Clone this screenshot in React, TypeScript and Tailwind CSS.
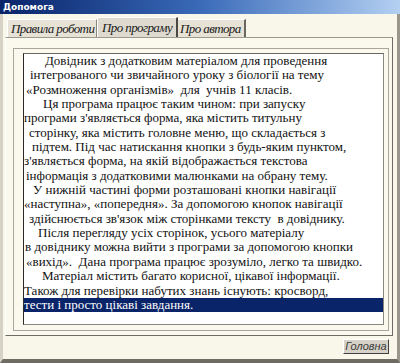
import React from "react";

const lines: { t: string; pl: string }[] = [
  { t: "Довідник з додатковим матеріалом для проведення", pl: "pl-[21px]" },
  { t: "інтегрованого чи звичайного уроку з біології на тему", pl: "pl-[6px]" },
  { t: "«Розмноження організмів»  для  учнів 11 класів.", pl: "pl-[2px]" },
  { t: "Ця програма працює таким чином: при запуску", pl: "pl-[19px]" },
  { t: "програми з'являється форма, яка містить титульну", pl: "pl-[0px]" },
  { t: "сторінку, яка містить головне меню, що складається з", pl: "pl-[5px]" },
  { t: "підтем. Під час натискання кнопки з будь-яким пунктом,", pl: "pl-[8px]" },
  { t: "з'являється форма, на якій відображається текстова", pl: "pl-[0px]" },
  { t: "інформація з додатковими малюнками на обрану тему.", pl: "pl-[2px]" },
  { t: "У нижній частині форми розташовані кнопки навігації", pl: "pl-[9px]" },
  { t: "«наступна», «попередня». За допомогою кнопок навігації", pl: "pl-[0px]" },
  { t: "здійснюється зв'язок між сторінками тексту  в довіднику.", pl: "pl-[5px]" },
  { t: "Після перегляду усіх сторінок, усього матеріалу", pl: "pl-[14px]" },
  { t: "в довіднику можна вийти з програми за допомогою кнопки", pl: "pl-[1px]" },
  { t: "«вихід».  Дана програма працює зрозуміло, легко та швидко.", pl: "pl-[2px]" },
  { t: "Матеріал містить багато корисної, цікавої інформації.", pl: "pl-[18px]" },
  { t: "Також для перевірки набутих знань існують: кросворд,", pl: "pl-[0px]" },
];

export default function App() {
  return (
    <div className="w-[400px] h-[363px] flex flex-col bg-[#f9f6ea] overflow-hidden">
      {/* Title bar */}
      <div className="h-[14px] flex items-center pl-[3px] bg-gradient-to-r from-[#0a246a] via-[#3a6ab8] to-[#b4d0f2]">
        <span
          className="text-white font-bold text-[9px] leading-none"
          style={{ fontFamily: '"DejaVu Sans", "Liberation Sans", sans-serif' }}
        >
          Допомога
        </span>
      </div>

      {/* Body */}
      <div className="flex-1 flex flex-col border-l-[3px] border-r-[3px] border-b-[4px] border-l-[#d6d2c6] border-r-[#9a968c] border-b-[#6e6b64]">
        {/* Tabs */}
        <div
          className="h-[23px] flex items-end pl-[4px] italic text-[13px] leading-none tracking-[-0.6px] text-[#1a1a1a] whitespace-nowrap"
          style={{ fontFamily: '"Liberation Serif", serif' }}
        >
          <div className="h-[18px] w-[90px] shrink-0 flex items-center pl-[3px] bg-[#e6e2d6] border-t border-l border-[#ffffff] border-r border-r-[#8a877f]">
            Правила роботи
          </div>
          <div className="h-[20px] w-[81px] shrink-0 flex items-center pl-[4px] bg-[#dedad0] border-t border-l border-[#ffffff] border-r-2 border-r-[#4a4843]">
            Про програму
          </div>
          <div className="h-[18px] w-[68px] shrink-0 flex items-center pl-[2px] bg-[#e6e2d6] border-t border-[#ffffff] border-r-2 border-r-[#6a675f]">
            Про автора
          </div>
        </div>

        {/* Tab panel */}
        <div className="ml-[2px] mr-[4px] h-[299px] border border-t-[#9c998f] border-l-[#ffffff] border-r-[#6e6b64] border-b-[#6e6b64] bg-[#fbf8ee] pt-[10px] pl-[7px] pr-[3px] pb-[4px] flex flex-col">
          {/* inner box */}
          <div className="flex-1 border border-[#a8a59c] pt-[4px] pl-[9px] pr-[4px] pb-[5px] flex flex-col">
            {/* memo */}
            <div
              className="flex-1 bg-white border border-[#8a877f] border-l-[#2a2a2a] border-t-[#6a675f] text-[13px] leading-[14.35px] text-[#111]"
              style={{ fontFamily: '"Liberation Serif", "Times New Roman", serif' }}
            >
              {lines.map((l, i) => (
                <div key={i} className={`whitespace-pre h-[14.35px] ${l.pl}`}>
                  {l.t}
                </div>
              ))}
              <div className="whitespace-pre h-[14.35px] bg-[#0a246a] text-white">
                тести і просто цікаві завдання.
              </div>
            </div>
          </div>
        </div>

        {/* Bottom bar */}
        <div className="flex-1 flex justify-end items-start pt-[3px] pr-[8px]">
          <div
            className="w-[46px] h-[15px] flex items-center justify-center bg-[#d6d2c8] border border-t-[#ffffff] border-l-[#ffffff] border-r-[#404040] border-b-[#404040] italic text-[11px] text-[#3a3a3a]"
            style={{ fontFamily: '"Liberation Sans", sans-serif' }}
          >
            Головна
          </div>
        </div>
      </div>
    </div>
  );
}
